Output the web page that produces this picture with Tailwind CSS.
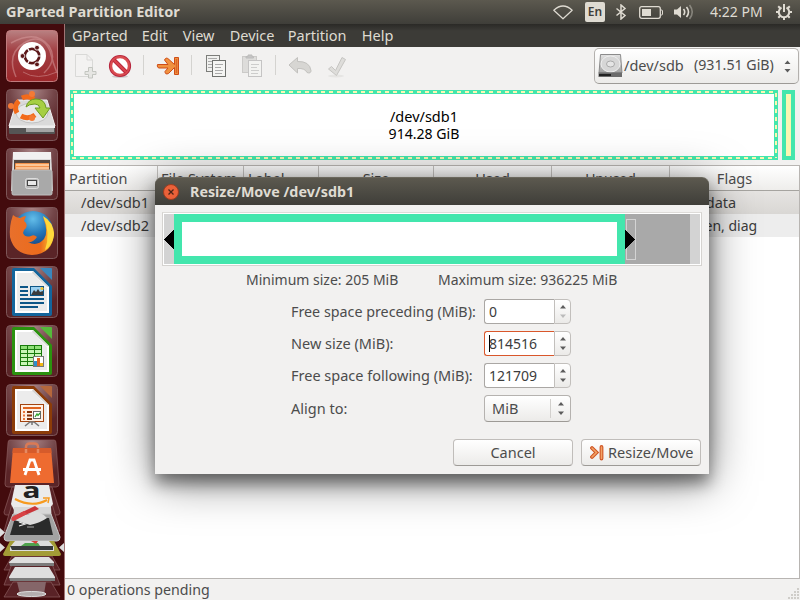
<!DOCTYPE html>
<html lang="en">
<head>
<meta charset="utf-8">
<title>GParted Partition Editor</title>
<script src="https://cdn.jsdelivr.net/npm/@tailwindcss/browser@4"></script>
</head>
<body class="w-[800px] h-[600px] overflow-hidden relative flex flex-col bg-[#f2f1f0] font-['Noto_Sans','Open_Sans',sans-serif] text-[14.5px] leading-[18px] text-[#4c4c4c] whitespace-nowrap">

<!-- Top panel -->
<header class="h-6 shrink-0 flex items-center bg-linear-to-b from-[#5c594f] to-[#3f3e39] text-[#dfdbd2] pl-1.5 pr-2">
  <span class="font-bold text-[14.5px] -mt-0.5">GParted Partition Editor</span>
  <div class="ml-auto flex items-center">
    <svg class="w-5 h-4" viewBox="0 0 20 16" fill="none" stroke="#dfdbd2" stroke-width="1.2" stroke-linejoin="round"><path d="M.8 6.2Q10-2.2 19.200 6.200L10 14.800Z"/></svg>
    <span class="ml-[12px] w-5 h-5 rounded-[2px] bg-[#dfdbd2] text-[#3f3e39] text-[12px] leading-5 font-semibold text-center">En</span>
    <svg class="ml-[10px] w-3 h-4" viewBox="0 0 12 16" fill="none" stroke="#dfdbd2" stroke-width="1.500"><path d="M1.500 4.500 10 11.500 6 15V1l4 3.500L1.500 11.500"/></svg>
    <svg class="ml-[12px] w-6 h-[13px]" viewBox="0 0 24 13"><rect x=".7" y=".7" width="20.600" height="11.600" rx="2" fill="none" stroke="#dfdbd2" stroke-width="1.300"/><path d="M3 3h9v7H3z" fill="#dfdbd2"/><path d="M22 4h.5q1 0 1 1v3q0 1-1 1H22" fill="none" stroke="#dfdbd2"/></svg>
    <svg class="ml-[11px] w-5 h-4" viewBox="0 0 20 16"><path d="M0 5.500h3L7 2v12L3 10.500H0z" fill="#dfdbd2"/><g fill="none" stroke="#dfdbd2" stroke-width="1.600"><path d="M9.500 5q2.400 3 0 6"/><path d="M12.500 3q4 5 0 10"/><path d="M15.500 1q5.500 7 0 14" opacity=".4"/></g></svg>
    <span class="ml-[16px] w-[52px] text-[14px]">4:22 PM</span>
    <svg class="ml-[14px] w-4 h-4" viewBox="0 0 16 16" fill="none" stroke="#dfdbd2"><path d="M5.500 3.500A5.200 5.200 0 1 0 10.500 3.500" stroke-width="2"/><path d="M8 0v8" stroke-width="2"/><path d="M2.200 2.200 4 4M13.800 2.200 12 4M0 8h3M13 8h3M2.300 13.700 4 12M13.700 13.700 12 12M8 13v3" stroke-width="2"/></svg>
  </div>
</header>

<div class="flex flex-1 min-h-0">
  <!-- Launcher -->
  <nav class="w-[65px] shrink-0 relative bg-[#430b0d] border-r border-[#a07474] pt-1.5 pl-1.5 flex flex-col gap-[7px]">
    <svg class="w-[52px] h-[52px] shrink-0" viewBox="0 0 52 52">
      <defs>
        <linearGradient id="red" x2="0" y2="1"><stop stop-color="#b98182"/><stop offset=".4" stop-color="#a23f43"/><stop offset="1" stop-color="#9c272a"/></linearGradient>
        <radialGradient id="tile" cx=".5" cy="0" r=".8"><stop stop-color="#a98486"/><stop offset=".55" stop-color="#734548"/><stop offset="1" stop-color="#5a2427"/></radialGradient>
        <linearGradient id="metal" x2="0" y2="1"><stop stop-color="#e2e2e2"/><stop offset="1" stop-color="#a0a0a0"/></linearGradient>
      </defs>
      <rect x=".5" y=".5" width="51" height="51" rx="4" fill="url(#red)" stroke="#c07b7d"/>
      <g fill="none" stroke="#d99fa0" opacity=".5"><path d="M10 47Q0 24 18 13T44 21Q47 33 51 43" stroke-width="1.500"/><path d="M5 13Q30-1 43 16 52 30 38 43" stroke-width="1.500"/><path d="M17 42Q31 51 51 42"/></g>
      <circle cx="26" cy="26" r="14" fill="#fff"/>
      <circle cx="26" cy="26" r="7.200" fill="none" stroke="#5c1719" stroke-width="2.800"/>
      <g stroke="#fff" stroke-width="1.200"><path d="M26 26 20 15.600M26 26H38M26 26 20 36.400"/></g><circle cx="26" cy="26" r="5.600" fill="#fff"/>
      <g fill="#5c1719" stroke="#fff" stroke-width=".8"><circle cx="16.500" cy="26" r="2.400"/><circle cx="31" cy="17.700" r="2.400"/><circle cx="31" cy="34.400" r="2.400"/></g>
    </svg>
    <svg class="w-[52px] h-[52px] shrink-0" viewBox="0 0 52 52">
      <rect x=".5" y=".5" width="51" height="51" rx="4" fill="url(#tile)" stroke="#7d5658"/>
      <path d="M11 11H41L49 37H3z" fill="#dadada" stroke="#f3f3f3"/><ellipse cx="26" cy="24" rx="16" ry="10" fill="#e8e8e8" stroke="#c2c2c2"/><path d="M3 37H49V44Q49 45 48 45H4Q3 45 3 44z" fill="#555"/><path d="M3 37H49V39H3z" fill="#eee"/><path d="M20 39H48V43H20z" fill="#a4a4a4"/>
      <g fill="none" stroke="#f26a1b" stroke-width="5"><path d="M13 12Q7 17 11 24"/><path d="M16 9Q22 6 28 10"/><path d="M15 27Q22 31 29 26"/></g>
      <g fill="#f47a35"><circle cx="5" cy="17" r="3"/><circle cx="26" cy="5" r="3"/><circle cx="26" cy="29" r="3"/></g>
      <path d="M20 18Q22 10 30 10 39 10 40 19H44L37 29 29 19H34Q33 15 29 15 23 15 20 18z" fill="#a6cf43" stroke="#6c9a20"/>
    </svg>
    <svg class="w-[52px] h-[52px] shrink-0" viewBox="0 0 52 52">
      <rect x=".5" y=".5" width="51" height="51" rx="4" fill="url(#tile)" stroke="#7d5658"/>
      <path d="M7 4H45L47 43H5z" fill="#dcdcdc"/><path d="M7 4H45V11H7z" fill="#f1f1f1"/><path d="M8 12H44V24H8z" fill="#55463e"/><path d="M9 16Q9 15 10 15H43V23H9z" fill="#f3924a"/><path d="M10 17H43" stroke="#ffd9b0" stroke-width="1.500"/><path d="M10 20H43" stroke="#fff0d9"/>
      <rect x="6" y="22" width="40" height="25" rx="1.500" fill="#a9a9a9" stroke="#bfbfbf"/><rect x="19.500" y="30.500" width="13" height="10" rx="2" fill="#b8b8b8" stroke="#dedede"/><rect x="21.500" y="32.500" width="9" height="5" fill="#e9e9e9" stroke="#444"/>
    </svg>
    <svg class="w-[52px] h-[52px] shrink-0" viewBox="0 0 52 52">
      <defs><radialGradient id="globe" cx=".5" cy=".2" r=".75"><stop stop-color="#63bde9"/><stop offset=".5" stop-color="#2478ba"/><stop offset="1" stop-color="#123c7c"/></radialGradient><linearGradient id="fox" x2="1" y2="0"><stop stop-color="#e8702c"/><stop offset=".7" stop-color="#ec6b1b"/><stop offset="1" stop-color="#ffd531"/></linearGradient></defs>
      <rect x=".5" y=".5" width="51" height="51" rx="4" fill="url(#tile)" stroke="#7d5658"/>
      <circle cx="27" cy="24" r="20" fill="url(#globe)"/>
      <path d="M7 8Q10 11 14 11 18 9 20 9L18 14Q22 17 20 21 17 23 17 26 19 31 25 29 28 27 31 30 27 36 22 35 31 40 38 32 43 25 37 10 46 17 48 26 47 47 26 48 8 47 4 30 3 19 7 8z" fill="url(#fox)"/>
      <path d="M37 9Q48 15 48 28 46 39 39 43 45 26 37 9z" fill="#ffd83c"/>
    </svg>
    <svg class="w-[52px] h-[52px] shrink-0" viewBox="0 0 52 52">
      <rect x=".5" y=".5" width="51" height="51" rx="4" fill="url(#tile)" stroke="#7d5658"/>
      <path d="M8 2H28L46 20V48Q46 50 44 50H8Q6 50 6 48V4Q6 2 8 2z" fill="#13659c"/><path d="M34 2H45Q46 2 46 3V14z" fill="#3b87bc"/><path d="M9 5H27L43 21V47H9z" fill="#fff"/><path d="M11 7H26L41 22V45H11z" fill="#ececec"/><path d="M27 5 43 21H41L26 7z" fill="#d6d6d6"/>
      <path d="M14 21H22M14 25H22M14 29H22M14 33H38M14 37H38M14 41H32" stroke="#0d5687" stroke-width="2"/><rect x="24.500" y="20.500" width="13" height="9" fill="#9bd0f0" stroke="#0d5687"/><path d="M25 29 28 24 30 26 32 23 34 26 37 25V29z" fill="#3b3b3b"/><circle cx="36" cy="22.500" r="1.600" fill="#f1c232"/>
    </svg>
    <svg class="w-[52px] h-[52px] shrink-0" viewBox="0 0 52 52">
      <rect x=".5" y=".5" width="51" height="51" rx="4" fill="url(#tile)" stroke="#7d5658"/>
      <path d="M8 2H28L46 20V48Q46 50 44 50H8Q6 50 6 48V4Q6 2 8 2z" fill="#2b920f"/><path d="M34 2H45Q46 2 46 3V14z" fill="#55b93b"/><path d="M9 5H27L43 21V47H9z" fill="#fff"/><path d="M11 7H26L41 22V45H11z" fill="#ececec"/><path d="M27 5 43 21H41L26 7z" fill="#d6d6d6"/>
      <path d="M14 20H36V41H14z" fill="#187a0b"/><g fill="#c8f5b5"><path d="M15 21h6v3h-6zM22 21h6v3h-6zM29 21h6v3h-6z" fill="#8fe077"/><path d="M15 25h6v3h-6zM22 25h6v3h-6zM29 25h6v3h-6zM15 29h6v3h-6zM22 29h6v3h-6zM29 29h6v3h-6zM15 33h6v3h-6zM22 33h6v3h-6zM15 37h6v3h-6zM22 37h6v3h-6z"/></g>
      <rect x="27.500" y="31.500" width="10" height="10" fill="#fff" stroke="#777"/><path d="M28 36h3v5h-3z" fill="#2e8ecb"/><path d="M31 33h3v8h-3z" fill="#e0641f"/><path d="M34 38h3v3h-3z" fill="#f1b814"/>
    </svg>
    <svg class="w-[52px] h-[52px] shrink-0" viewBox="0 0 52 52">
      <rect x=".5" y=".5" width="51" height="51" rx="4" fill="url(#tile)" stroke="#7d5658"/>
      <path d="M8 2H28L46 20V48Q46 50 44 50H8Q6 50 6 48V4Q6 2 8 2z" fill="#8c3c08"/><path d="M34 2H45Q46 2 46 3V14z" fill="#b5673c"/><path d="M9 5H27L43 21V47H9z" fill="#fff"/><path d="M11 7H26L41 22V45H11z" fill="#ececec"/><path d="M27 5 43 21H41L26 7z" fill="#d6d6d6"/>
      <rect x="14.500" y="20.500" width="23" height="17" fill="#fff0e4" stroke="#a3440f"/><path d="M17 24H35" stroke="#df6420" stroke-width="2"/><path d="M17 28h2M17 31.500h2M17 35h2" stroke="#e9763a" stroke-width="2"/><path d="M21 28h5M21 31.500h5M21 35h5" stroke="#84330a" stroke-width="2"/><rect x="27.500" y="27.500" width="7" height="7" fill="#fff" stroke="#666"/><path d="M29 33 31 30 32 31.500 34 29" stroke="#2fa32f" stroke-width="1.300" fill="none"/><path d="M19 42 24 38H28L33 42M26 38v3" stroke="#777" stroke-width="1.500" fill="none"/>
    </svg>
    <!-- Folded launcher tiles -->
    <svg class="absolute left-0 top-[414px] w-16 h-[162px]" viewBox="0 438 64 162">
      <g stroke="#8a5c5e" stroke-opacity=".7">
        <path d="M10 440H54Q56 440 56 443L59 484Q59 487 56 487H8Q5 487 5 484L8 443Q8 440 10 440z" fill="url(#tile)"/>
        <path d="M12 487H52L60 512Q60 515 58 515H6Q4 515 4 512z" fill="#592226"/>
        <path d="M12 504H52L60 531H4z" fill="#592226"/>
        <path d="M12 556H52L60 570H4z" fill="#592226"/><path d="M12 564H52L60 585H4z" fill="#592226"/>
        <path d="M13 582H51L60 597H4z" fill="#592226"/>
      </g>
      <path d="M26 454V447Q26 443.500 30 443.500H34Q38 443.500 38 447V454" fill="none" stroke="#d97a55" stroke-width="2.500"/>
      <path d="M13 448H51L54 483H10z" fill="#ee6b30"/><path d="M13 448H51L51.600 453H12.400z" fill="#d65b2b"/><path d="M26 453V449M38 453V449" stroke="#e58a63" stroke-width="2.500"/>
      <path d="M25 475 30 460H34L39 475M23 469.500H41" fill="none" stroke="#fff" stroke-width="2.800"/>
      <path d="M15 485H49L53 504 47 512H15L11 504z" fill="#ebebeb"/>
      <text x="22.500" y="498" font-family="Open Sans, sans-serif" font-weight="700" font-size="21" textLength="18" lengthAdjust="spacingAndGlyphs" fill="#222">a</text>
      <path d="M15 499Q32 508 47 500" fill="none" stroke="#f79b1f" stroke-width="2"/><path d="M43 498L49 498 48 503" fill="none" stroke="#f79b1f" stroke-width="1.500"/>
      <path d="M14 507H51L52 522H13z" fill="#d8d8d8"/>
      <path d="M13 514 51 514 60 537Q60 541 57 541H7Q4 541 4 537z" fill="#a2a2a2" stroke="#c9c9c9"/><path d="M15 518H49L53 535H10z" fill="#2a2b2b"/><path d="M14 520Q20 514 28 515 37 508 47 518 40 523 30 525 21 522 14 520z" fill="#dcdcdc"/>
      <path d="M19 522 25 524 19 526" fill="none" stroke="#eee" stroke-width="1.300"/><path d="M27 527h7" stroke="#aaa"/>
      <path d="M14 516 35 506 39 509 16 519z" fill="#c9353a"/><path d="M12 517Q10 521 14 521L27 514 24 511z" fill="#d84346"/>
      <path d="M10 541H54L61 554Q61 556 59 556H5Q3 556 3 554z" fill="#a39c36"/>
      <path d="M15 541H49L54 547V551H10V547z" fill="#dcdcdc"/><path d="M10 546H53V550H12z" fill="#37393b"/><path d="M25 543h13l2 3H21z" fill="#4fa34d"/><path d="M31 541h7l-2 3z" fill="#d84439"/>
      <path d="M15 557H49L54 562H9z" fill="#dedede"/><path d="M9 562H54V566H10z" fill="#7b7b7b"/><path d="M9 562.500H54" stroke="#ddd"/>
      <path d="M15 567H49L55 577H9z" fill="#dedede"/><path d="M9 577H55V581H10z" fill="#7b7b7b"/><path d="M9 577.500H55" stroke="#ddd"/>
      <path d="M17 582H46L44 594H20z" fill="#856669"/><ellipse cx="31.500" cy="594" rx="14.500" ry="2.500" fill="#b5aeae" stroke="#ddd"/>
      <path d="M0 528 5 532.500 0 537zM0 543 5 547.500 0 552zM64 543 59 547.500 64 552z" fill="#dedede"/>
    </svg>
  </nav>

  <!-- Main window -->
  <main class="flex-1 min-w-0 flex flex-col">
    <div class="h-[23px] shrink-0 flex items-center gap-[14px] pl-[7px] pb-0.5 bg-linear-to-b from-[#2a2926] via-[#3c3b37] via-30% to-[#3c3b37] text-[#dfdbd2]">
      <span>GParted</span><span class="w-[27px]">Edit</span><span class="w-[33px]">View</span><span class="w-11">Device</span><span class="w-[60px]">Partition</span><span>Help</span>
    </div>

    <div class="h-[43px] shrink-0 flex items-start relative">
      <svg class="w-[300px] h-[38px]" viewBox="65 47 300 38">
        <g opacity=".55"><path d="M75.500 54.500H87L92.500 60V76.500H75.500z" fill="#f4f4f3" stroke="#c6c6c3"/><path d="M87 54.500V60H92.500" fill="none" stroke="#c6c6c3"/><path d="M88.500 67.500h4v4h3.500v3h-3.500v3.500h-4v-3.500H85v-3h3.500z" fill="#deded9" stroke="#9ea39a"/></g>
        <ellipse cx="120" cy="76.500" rx="8" ry="1.500" fill="#ccc"/><circle cx="120" cy="66" r="9.200" fill="none" stroke="#b6243c" stroke-width="3.800"/><circle cx="120" cy="66" r="9" fill="#fff" stroke="#d94c50" stroke-width="2.400"/><path d="M114 60 126 72" stroke="#b6243c" stroke-width="4"/><path d="M114 60 126 72" stroke="#da444b" stroke-width="2.400"/>
        <path d="M143.500 55V75M191.500 55V75M275.500 55V75" stroke="#d4d3d0"/>
        <path d="M157.500 64.500H168L164.500 60Q166 56.500 169 59.500L174.500 64.500V57.500H178.500V74.500H174.500V67.500L168.500 73.500Q165 75 165 71.500L168 68H158.500Q156.500 66 157.500 64.500z" fill="#f0913f" stroke="#ce4c17"/><path d="M176.500 59V73" stroke="#db642a" stroke-width="1.500"/>
        <g><rect x="206.500" y="55.500" width="13" height="16" fill="#f0f0ee" stroke="#7c7d7a"/><path d="M208 58.500h9M208 61.500h8M208 64.500h4M208 67.500h4" stroke="#aaa"/><rect x="212.500" y="60.500" width="13" height="16" fill="#f5f5f3" stroke="#6f716e"/><path d="M215 64.500h8M215 67.500h6M215 70.500h8M215 73.500h7" stroke="#aaa"/></g>
        <g opacity=".5"><rect x="242.500" y="56.500" width="14" height="16" fill="#c9c9c6" stroke="#a5a5a1"/><path d="M246 58v-1.500h2V55h4v1.500h1.500V58z" fill="#999" stroke="#888"/><rect x="248.500" y="60.500" width="13" height="16" fill="#f5f5f3" stroke="#999"/><path d="M251 64.500h8M251 67.500h6M251 70.500h8M251 73.500h7" stroke="#aaa"/></g>
        <path d="M289 65 297.500 57.500V61.500Q309.500 61 311 70.500 311 74 307 72.500 305 68 297.500 68.500V73z" fill="#d7d6d3" stroke="#c2c1be"/>
        <ellipse cx="336" cy="76" rx="8" ry="1.500" fill="#e6e5e3"/><path d="M328.500 69 331.500 66.500 335.500 70.500 342 57.500 345.500 59.500 336.500 75.500z" fill="#deddda" stroke="#c6c5c2"/>
      </svg>
      <div class="absolute right-px top-[1px] w-[205px] h-[36px] rounded-[5px] border border-[#b3b0ad] border-b-[#9d9a96] bg-linear-to-b from-white to-[#ecebe9] flex items-center pl-[3px] pr-[7px]">
        <svg class="w-[25px] h-6" viewBox="0 0 25 24"><path d="M2.500.500H22.500L24 19H1z" fill="url(#metal)" stroke="#8b8b8b"/><ellipse cx="12.500" cy="10" rx="9.500" ry="8" fill="#d6d6d6" stroke="#eee"/><ellipse cx="12.500" cy="10" rx="4" ry="3" fill="#e5e5e5" stroke="#aaa"/><path d="M.5 18.500H24V23H.5z" fill="#6b6b6b"/><path d="M1 21H13" stroke="#222" stroke-width="2"/></svg>
        <span class="ml-px w-[61px] -mt-0.5">/dev/sdb</span><span class="ml-[9px] -mt-0.5 text-[14.2px]">(931.51 GiB)</span>
        <svg class="ml-auto w-[7px] h-[13px]" viewBox="0 0 7 13" fill="#5c5c5c"><path d="M.5 4 3.500.500 6.500 4zM.5 9 3.500 12.500 6.500 9z"/></svg>
      </div>
    </div>

    <!-- Disk map -->
    <div class="h-[70px] shrink-0 flex gap-1 px-[5px]">
      <div class="w-[708px] relative bg-white flex flex-col items-center justify-center text-black leading-[17px] text-[14.5px]">
        <svg class="absolute inset-0 w-full h-full" viewBox="0 0 708 70" fill="none" shape-rendering="crispEdges"><rect x="2" y="2" width="704" height="66" stroke="#43e6ad" stroke-width="4"/><path d="M3 2H706V68" stroke="#fbf6b2" stroke-width="2" stroke-dasharray="4 4"/><path d="M2 4V68H706" stroke="#fbf6b2" stroke-width="2" stroke-dasharray="4 4"/></svg>
        <span>/dev/sdb1</span><span class="text-[14.1px]">914.28 GiB</span>
      </div>
      <div class="w-[13px] border-4 border-[#43e6ad] bg-[#fbf6b2]"></div>
    </div>

    <!-- Partition table -->
    <section class="mt-[5px] h-[414px] shrink-0 bg-white border border-[#b8b5b2] border-l-0 text-[#4c4c4c]">
      <div class="h-[25px] flex bg-linear-to-b from-white to-[#eeedeb] border-b border-[#a6a4a0] text-center leading-[24px] *:border-r *:border-[#c4c2bf] *:shrink-0">
        <div class="w-[93px] text-left pl-1">Partition</div>
        <div class="w-[86px] text-left pl-[3px]">File System</div>
        <div class="w-[75px] text-left pl-1">Label</div>
        <div class="w-[115px]">Size</div>
        <div class="w-[118px]">Used</div>
        <div class="w-[118px] text-[14px] leading-[26px]">Unused</div>
        <div class="flex-1 border-r-0!">Flags</div>
      </div>
      <div class="h-[23px] flex items-center pb-0.5 pl-4 bg-linear-to-b from-[#e6e4e2] to-[#d9d7d4] text-[#3c3c3c]"><span class="w-[594px]">/dev/sdb1</span><span>msftdata</span></div>
      <div class="h-[23px] flex items-center pb-0.5 pl-4 bg-[#ededed] text-[#3c3c3c]"><span class="w-[594px]">/dev/sdb2</span><span class="text-[14px] mt-0.5">hidden, diag</span></div>
    </section>

    <footer class="flex-1 flex items-center pl-0.5 relative"><span class="text-[14.2px]">0 operations pending</span>
      <svg class="absolute right-0 bottom-0 w-3 h-3" viewBox="0 0 12 12" fill="#cfcdc9"><path d="M9 0h2v2H9zM6 3h2v2H6zM9 3h2v2H9zM3 6h2v2H3zM6 6h2v2H6zM9 6h2v2H9zM0 9h2v2H0zM3 9h2v2H3zM6 9h2v2H6zM9 9h2v2H9z"/></svg>
    </footer>
  </main>
</div>

<!-- Resize/Move dialog -->
<div class="absolute left-[155px] top-[177px] w-[554px] h-[297px] rounded-t-[7px] bg-[#f2f1f0] shadow-[0_9px_16px_rgba(0,0,0,0.45),0_7px_46px_rgba(0,0,0,0.5)] flex flex-col">
  <div class="h-7 shrink-0 rounded-t-[7px] bg-linear-to-b from-[#5c594f] to-[#3f3e39] border-t border-[#6b685e] flex items-center pl-2 text-[#dfdbd2]">
    <svg class="w-4 h-4" viewBox="0 0 16 16"><circle cx="8" cy="8" r="7.500" fill="#ea6139" stroke="#9d3c20"/><path d="M5.500 5.500l5 5M10.500 5.500l-5 5" stroke="#4a2418" stroke-width="1.300"/></svg>
    <span class="ml-[11px] font-bold text-[14.3px]">Resize/Move /dev/sdb1</span>
  </div>
  <div class="mt-[7px] ml-[7px] w-[540px] h-[54px] shrink-0 border border-[#d5d3d0] border-t-[#dddbd8]">
    <svg class="w-[538px] h-[52px]" viewBox="163 213 538 52" shape-rendering="crispEdges"><path d="M163 213h538v52H163z" fill="#fff"/><path d="M164 214h536v50H164z" fill="#d3d3d3"/><path d="M625 214h65v50h-65z" fill="#a9a9a9"/><path d="M174 214h451v50H174z" fill="#43e6ad"/><path d="M182 222h435v34H182z" fill="#fff"/><path d="M626.500 219.500h9v40h-9z" fill="none" stroke="#d3d3d3"/><path d="M174 229.500V249L164 239.300zM625 229.500V249L635 239.300z" fill="#000"/></svg>
  </div>
  <div class="mt-[5px] flex pl-[91px] text-[14px]"><span class="w-48">Minimum size: 205 MiB</span><span>Maximum size: 936225 MiB</span></div>
  <div class="mt-[10px] ml-[136px] grid grid-cols-[193px_87px] auto-rows-[25px] gap-y-[7px] items-center">
    <span class="text-[14.3px]">Free space preceding (MiB):</span>
    <div class="h-[25px] flex text-[#3c3c3c] text-[14px]"><div class="w-[70px] border border-[#aaa7a4] border-r-0 rounded-l-[3px] bg-white pl-1 flex items-center"><span>0</span></div><div class="w-[17px] border border-[#c2bfbc] rounded-r-[4px] bg-linear-to-b from-white to-[#ebeae8] flex items-center justify-center"><svg class="w-[6px] h-[13px]" viewBox="0 0 6 13"><path d="M0 3.500 3 0 6 3.500z" fill="#5c5c5c"/><path d="M0 9.500 3 13 6 9.500z" fill="#bbb"/></svg></div></div>
    <span class="-mt-0.5">New size (MiB):</span>
    <div class="h-[25px] flex text-[#3c3c3c] text-[14px]"><div class="w-[70px] border border-[#d9572b] border-r-0 rounded-l-[3px] bg-white pl-1 flex items-center relative"><i class="absolute left-1 top-[3px] w-px h-[17px] bg-black"></i><span>814516</span></div><div class="w-[17px] border border-[#c2bfbc] rounded-r-[4px] bg-linear-to-b from-white to-[#ebeae8] flex items-center justify-center"><svg class="w-[6px] h-[13px]" viewBox="0 0 6 13" fill="#5c5c5c"><path d="M0 3.500 3 0 6 3.500zM0 9.500 3 13 6 9.500z"/></svg></div></div>
    <span class="-mt-0.5">Free space following (MiB):</span>
    <div class="h-[25px] flex text-[#3c3c3c] text-[14px]"><div class="w-[70px] border border-[#aaa7a4] border-r-0 rounded-l-[3px] bg-white pl-1 flex items-center"><span>121709</span></div><div class="w-[17px] border border-[#c2bfbc] rounded-r-[4px] bg-linear-to-b from-white to-[#ebeae8] flex items-center justify-center"><svg class="w-[6px] h-[13px]" viewBox="0 0 6 13" fill="#5c5c5c"><path d="M0 3.500 3 0 6 3.500zM0 9.500 3 13 6 9.500z"/></svg></div></div>
    <span class="mt-px">Align to:</span>
    <div class="h-[27px] mt-0.5 rounded-[4px] border border-[#b5b2af] border-b-[#9d9a96] bg-linear-to-b from-white to-[#ecebe9] flex items-center pl-[7px]"><span class="-mt-0.5">MiB</span><i class="ml-auto w-px h-[19px] bg-[#d2d0cd]"></i><svg class="ml-[7px] mr-[6px] w-[6px] h-[13px]" viewBox="0 0 6 13" fill="#5c5c5c"><path d="M0 3.500 3 0 6 3.500zM0 9.500 3 13 6 9.500z"/></svg></div>
  </div>
  <div class="mt-auto mb-2 mr-2 flex justify-end gap-2">
    <div class="w-[120px] h-[27px] rounded-[4px] border border-[#c0bdba] border-b-[#9d9a96] bg-linear-to-b from-white to-[#ecebe9] flex items-center justify-center"><span class="-mt-0.5">Cancel</span></div>
    <div class="w-[120px] h-[27px] rounded-[4px] border border-[#c0bdba] border-b-[#9d9a96] bg-linear-to-b from-white to-[#ecebe9] flex items-center pl-2"><svg class="w-[14px] h-4" viewBox="0 0 14 16" fill="none" stroke-linecap="round"><path d="M2 3 6.500 7.500 2 12M11.500 2V13.500" stroke="#cf5424" stroke-width="3.800"/><path d="M2 3 6.500 7.500 2 12M11.500 2V13.500" stroke="#f2a265" stroke-width="1.600"/></svg><span class="ml-[4px] -mt-0.5">Resize/Move</span></div>
  </div>
</div>
</body>
</html>
